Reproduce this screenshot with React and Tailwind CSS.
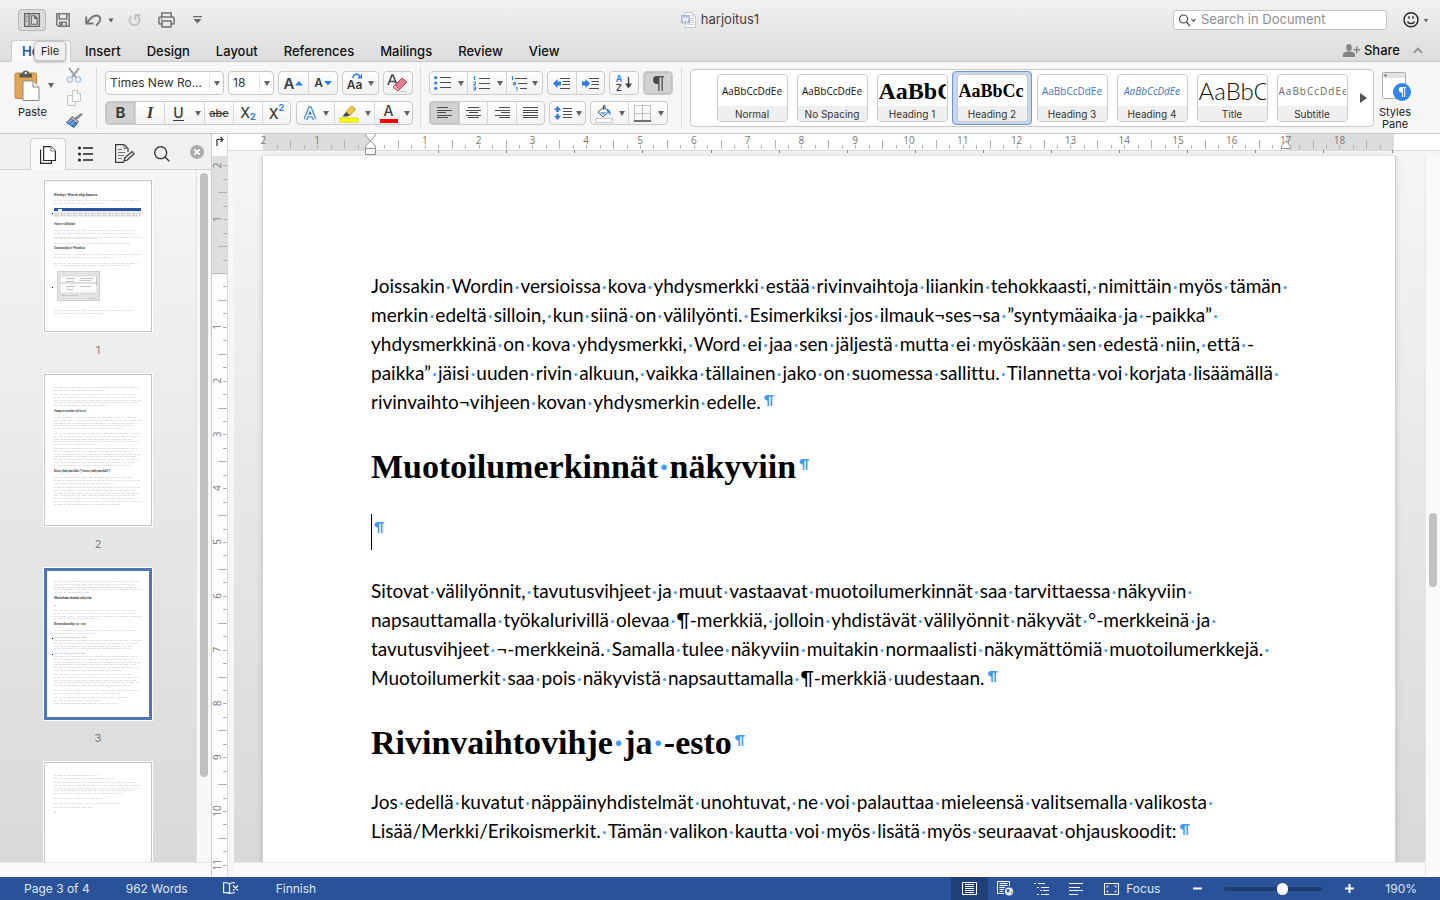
import React from "react";

const GROUP = "flex h-6 shrink-0 rounded border border-[#cbcbcb] bg-gradient-to-b from-white to-[#f1f1f1] overflow-hidden";
const cellBase = "flex h-full items-center justify-center text-[#3d3d3d]";

function Caret({ className = "" }) {
  return (
    <svg width="6" height="5" viewBox="0 0 6 5" className={className} aria-hidden="true">
      <path d="M0 0H6L3 5Z" fill="#636363" />
    </svg>
  );
}

function Cell({ label, width, on = false, divided = false, children }) {
  return (
    <button
      type="button"
      aria-label={label}
      className={`${cellBase} ${width} ${on ? "bg-[#d2d2d2] shadow-[inset_0_0_2px_#999]" : ""} ${divided ? "border-l border-[#d6d6d6]" : ""}`}
    >
      {children}
    </button>
  );
}

function QuickAccess() {
  return (
    <div className="flex items-center pl-[18px] text-[#7b7b7b]">
      <button type="button" aria-label="Sidebar" className="flex h-[22px] w-7 items-center justify-center rounded-[3px] border border-[#b9b9b9] bg-[#dadada]">
        <svg width="16" height="14" viewBox="0 0 16 14" fill="none" stroke="#636363" strokeWidth="1.3">
          <path d="M.7.7H15.3V13.3H.7ZM5 .7V13.3" />
          <path d="M2 3.3h1.4M2 5.8h1.4M2 8.3h1.4" strokeWidth="1" />
          <path d="M7.3 2.8h3.7l2.2 2.2v6.2H7.3ZM10.7 3v2.4h2.4" strokeWidth="1.1" />
        </svg>
      </button>
      <button type="button" aria-label="Save" className="ml-[10px]">
        <svg width="14" height="14" viewBox="0 0 14 14" fill="none" stroke="#7b7b7b" strokeWidth="1.6">
          <path d="M.8.8H13.2V13.2H2.4L.8 11.6Z" />
          <path d="M3.2 1v5h7.6V1" />
          <path d="M3.8 13V9.2h6.4V13" />
          <path d="M4.6 9.8h2.2V13H4.6Z" fill="#7b7b7b" stroke="none" />
        </svg>
      </button>
      <button type="button" aria-label="Undo" className="ml-[15px] flex items-center gap-[6px]">
        <svg width="17" height="13" viewBox="0 0 17 13" fill="none" stroke="#777" strokeWidth="2">
          <path d="M1.2 2.5V9.6H8.4M1.8 9C5 4.5 8 1.4 11.2 1.4c2.600 0 4 1.600 4 3.800 0 2.400-1.600 3.800-4.200 6.600" />
        </svg>
        <Caret className="scale-90" />
      </button>
      <button type="button" aria-label="Redo" className="ml-[14px]">
        <svg width="13" height="14" viewBox="0 0 13 14" fill="none" stroke="#c3c3c3" strokeWidth="1.9">
          <path d="M3.500 3.200A5 5 0 1 0 9.600 3.200M7.300 7V2H12.500" />
        </svg>
      </button>
      <button type="button" aria-label="Print" className="ml-[17px]">
        <svg width="17" height="16" viewBox="0 0 17 16" fill="none" stroke="#717171" strokeWidth="1.5">
          <path d="M3.800 5V1H13.200V5" />
          <path d="M4 12H1.700Q.9 12 .9 11V6.200Q.9 5 2.100 5H14.900Q16.100 5 16.100 6.200V11Q16.100 12 15.300 12H13" />
          <path d="M4 9H13V15H4ZM3 7h1.200" />
        </svg>
      </button>
      <button type="button" aria-label="Customize Toolbar" className="ml-[18px]">
        <svg width="9" height="8" viewBox="0 0 9 8"><path d="M0 0H9V1.300H0ZM.5 3H8.500L4.500 7.500Z" fill="#686868" /></svg>
      </button>
    </div>
  );
}

function TitleBar() {
  return (
    <div className="grid h-10 grid-cols-[1fr_auto_1fr] items-center">
      <QuickAccess />
      <div className="flex items-center gap-1 text-[13px] text-[#404040]">
        <svg width="16" height="16" viewBox="0 0 16 16">
          <path d="M4 .5H11L14.500 4V15.500H4Z" fill="#fff" stroke="#c3c6cb" />
          <path d="M11 .5V4h3.500" fill="#eee" stroke="#c3c6cb" />
          <path d="M9 6.500h4M9 8.500h4M9 10.500h4M6 12.500h7" stroke="#ccd0d8" />
          <rect x="0" y="3" width="9" height="8.500" fill="#a6b8df" />
          <path d="M1.800 5 3 9.500 4.500 5.500 6 9.500 7.200 5" fill="none" stroke="#fff" strokeWidth="1.100" />
        </svg>
        <span>harjoitus1</span>
      </div>
      <div className="flex items-center justify-end pr-[11px]">
        <label className="flex h-5 w-[214px] items-center rounded-[3px] border border-[#c4c4c4] bg-white pl-1">
          <svg width="20" height="13" viewBox="0 0 20 13" fill="none" stroke="#4a4a4a" strokeWidth="1.200" className="shrink-0" aria-hidden="true">
            <circle cx="5.500" cy="5" r="4" /><path d="M8.400 8 12 12M13.500 5.200 15.500 7.200 17.500 5.200" />
          </svg>
          <input aria-label="Search in Document" placeholder="Search in Document" className="ml-[3px] min-w-0 flex-1 bg-transparent text-[13px] outline-none placeholder:text-[#8e8e8e]" />
        </label>
        <button type="button" aria-label="Feedback" className="ml-4 flex items-center gap-1">
          <svg width="16" height="17" viewBox="0 0 16 17" fill="none" stroke="#262626" strokeWidth="1.400">
            <circle cx="8" cy="7.700" r="7" /><path d="M4.500 9.400c1 2.800 6 2.800 7 0M6 4.200v2.500M10 4.200v2.500" />
          </svg>
          <Caret className="scale-75" />
        </button>
      </div>
    </div>
  );
}

const TABS = ["Insert", "Design", "Layout", "References", "Mailings", "Review", "View"];

function TabBar() {
  return (
    <div className="flex h-[22px] items-stretch border-b border-[#c9c9c9] text-[13px] font-medium text-[#111]">
      <div className="relative -mb-px ml-[11px] w-[60px]">
        <button type="button" className="h-full w-full rounded-t-sm border border-b-0 border-[#cdcdcd] bg-[#fafafa] pl-[10px] pt-px text-left font-semibold text-[#2b579a]">Home</button>
        <span role="tooltip" className="absolute left-[23px] top-px flex h-5 w-8 items-center justify-center rounded-sm border border-[#c6c6c6] bg-[#f1f1f1] text-[11px] font-normal text-[#222] shadow-[0_1px_3px_rgba(0,0,0,0.35)]">File</span>
      </div>
      <nav className="flex items-center gap-[26px] pl-[14px] pt-[2px]">
        {TABS.map((t) => <button key={t} type="button">{t}</button>)}
      </nav>
      <div className="ml-auto flex items-center pr-[17px]">
        <button type="button" className="flex items-center gap-1">
          <svg width="17" height="13" viewBox="0 0 17 13" fill="#858585">
            <ellipse cx="6" cy="3.500" rx="2.800" ry="3.500" /><path d="M0 13V10Q0 8.500 4 7.500H8Q12 8.500 12 10V13Z" />
            <path d="M13 2.500h1.500V5H17v1.500H14.500V9H13V6.500H10.500V5H13Z" />
          </svg>
          Share
        </button>
        <button type="button" aria-label="Collapse Ribbon" className="ml-[13px]">
          <svg width="10" height="7" viewBox="0 0 10 7" fill="none" stroke="#8b8b8b" strokeWidth="1.800"><path d="M1 6 5 1.500 9 6" /></svg>
        </button>
      </div>
    </div>
  );
}

function Clipboard() {
  return (
    <div className="flex h-full w-24 shrink-0">
      <div className="flex w-14 shrink-0 flex-col pl-[14px] pt-[8px]">
        <button type="button" className="flex flex-col items-start">
          <span className="flex items-center gap-2">
            <svg width="26" height="31" viewBox="0 0 26 31">
              <rect x="1" y="3" width="21.500" height="25.500" rx="1.500" fill="#e0a556" stroke="#c58c40" />
              <path d="M5.500 7.500V4.500Q5.500 3.500 7 3.500H8.500Q8.500 .5 11.800 .5T15 3.500H16.500Q18 3.500 18 4.500V7.500Z" fill="#595959" />
              <circle cx="11.800" cy="3" r="1.200" fill="#eee" />
              <path d="M9 11H19L25 17V30.500H9Z" fill="#fff" stroke="#8c8c8c" />
              <path d="M19 11V17H25" fill="#f5f5f5" stroke="#8c8c8c" />
            </svg>
            <Caret />
          </span>
          <span className="ml-1 mt-[3px] text-[11px] leading-4 text-[#222]">Paste</span>
        </button>
      </div>
      <div className="flex w-9 shrink-0 flex-col items-center pt-[5px]">
        <button type="button" aria-label="Cut">
          <svg width="16" height="16" viewBox="0 0 16 16" fill="none">
            <path d="M3 1 10.500 11M13 1 5.500 11" stroke="#a0a0a0" strokeWidth="2" />
            <circle cx="3.800" cy="12.500" r="2.600" stroke="#a9c4e4" strokeWidth="1.400" /><circle cx="12" cy="12.500" r="2.600" stroke="#a9c4e4" strokeWidth="1.400" />
          </svg>
        </button>
        <button type="button" aria-label="Copy" className="mt-[7px]">
          <svg width="14" height="16" viewBox="0 0 14 16" fill="#f6f6f6" stroke="#c5c5c5">
            <path d="M.5 5.500H5L8.500 9V15.500H.5Z" /><path d="M5.500 .5H10.500L13.500 3.500V11.500H5.500Z" /><path d="M10.500 .5V3.500H13.500" />
          </svg>
        </button>
        <button type="button" aria-label="Format Painter" className="mt-[7px]">
          <svg width="17" height="15" viewBox="0 0 17 15">
            <path d="M16 .8 10.500 5.500M14.200 1.800 9 6.200" stroke="#8c8c8c" strokeWidth="2.400" />
            <path d="M6 3.500 12.500 8.500 11 10.500 4.500 5.500Z" fill="#c9c9c9" stroke="#606060" />
            <path d="M4.500 5.500 11 10.500Q9.500 12.500 8 14.500L.5 9.500Q3 8 4.500 5.500Z" fill="#4a84c4" stroke="#3d5f88" />
            <path d="M2.500 9.500 6 6.500M5 11.500 8 8.500" stroke="#b9d3ef" />
          </svg>
        </button>
      </div>
    </div>
  );
}

function Combo({ label, value, width }) {
  return (
    <div className={`relative flex h-6 shrink-0 rounded border border-[#c6c6c6] bg-white ${width}`}>
      <select aria-label={label} defaultValue={value} className="h-full w-full appearance-none bg-transparent pl-1 pr-[15px] text-[12px] text-[#333] outline-none">
        <option>{value}</option>
      </select>
      <span className="pointer-events-none absolute inset-y-[2px] right-0 flex w-[14px] items-center justify-center border-l border-[#e2e2e2]"><Caret /></span>
    </div>
  );
}

const BLUE = "#2b7de1";

function FontGroup() {
  return (
    <div className="ml-2 flex w-[308px] shrink-0 flex-col gap-[6px]">
      <div className="flex justify-between">
        <Combo label="Font" value="Times New Ro..." width="w-[119px]" />
        <Combo label="Font Size" value="18" width="w-[46px]" />
        <div className={GROUP}>
          <Cell label="Increase Font Size" width="w-[29px]">
            <span className="text-[15px] font-semibold leading-none">A</span>
            <svg width="8" height="5" viewBox="0 0 8 5" className="ml-px"><path d="M0 4.500 4 0 8 4.500Z" fill={BLUE} /></svg>
          </Cell>
          <Cell label="Decrease Font Size" width="w-[29px]" divided>
            <span className="text-[12px] font-semibold leading-none">A</span>
            <svg width="8" height="5" viewBox="0 0 8 5" className="ml-px"><path d="M0 0H8L4 4.500Z" fill={BLUE} /></svg>
          </Cell>
        </div>
        <div className={GROUP}>
          <Cell label="Change Case" width="w-[35px] gap-[6px]">
            <span className="relative pt-[3px] text-[12px] font-semibold leading-none">
              Aa
              <svg width="10" height="6" viewBox="0 0 10 6" fill="none" stroke={BLUE} strokeWidth="1.500" className="absolute -top-[3px] left-[5px]"><path d="M.8 5Q1.500 1.200 4.500 1.200 7 1.200 8 4M9.500 1V4.700H6" /></svg>
            </span>
            <Caret />
          </Cell>
        </div>
        <div className={GROUP}>
          <Cell label="Clear Formatting" width="w-7">
            <svg width="22" height="20" viewBox="0 0 22 20">
              <path d="M1 12 5 2H6L10 12M2.500 8.500H8.500" fill="none" stroke="#4a4a4a" strokeWidth="1.700" />
              <path d="M15 5 20 9 11 18 6 14Z" fill="#e07d8d" stroke="#b84c64" /><path d="M8 12 12.500 16.500 11 18 6 14Z" fill="#f6c3cb" stroke="#b84c64" />
              <path d="M12 18.500H20" stroke="#ccc" />
            </svg>
          </Cell>
        </div>
      </div>
      <div className="flex justify-between">
        <div className={GROUP}>
          <Cell label="Bold" width="w-[29px]" on><b className="text-[15px]">B</b></Cell>
          <Cell label="Italic" width="w-[29px]" divided><i className="font-['Liberation_Serif',serif] text-[17px] font-bold">I</i></Cell>
          <Cell label="Underline" width="w-[28px]" divided><span className="border-b border-[#3d3d3d] text-[14px] font-medium leading-[14px]">U</span></Cell>
          <Cell label="Underline Style" width="w-3"><Caret /></Cell>
          <Cell label="Strikethrough" width="w-[29px]" divided><s className="text-[11px] font-medium">abc</s></Cell>
          <Cell label="Subscript" width="w-[29px]" divided><span className="flex text-[14px] font-medium leading-none">X<span className="pt-[6px] text-[9px] font-bold text-[#2b7de1]">2</span></span></Cell>
          <Cell label="Superscript" width="w-[28px]" divided><span className="flex pt-[2px] text-[14px] font-medium leading-none">X<span className="-mt-1 text-[9px] font-bold text-[#2b7de1]">2</span></span></Cell>
        </div>
        <div className={GROUP}>
          <Cell label="Text Effects" width="w-[37px] gap-[6px]">
            <svg width="14" height="15" viewBox="-.5 -.5 14 15"><path d="M2 13 6.500 1.500 11 13M3.500 9H9.500" fill="none" stroke="#3b8ae6" strokeWidth="4" strokeLinejoin="round" /><path d="M2 13 6.500 1.500 11 13M3.500 9H9.500" fill="none" stroke="#fff" strokeWidth="1.500" strokeLinejoin="round" /></svg>
            <Caret />
          </Cell>
          <Cell label="Highlight" width="w-7" divided>
            <svg width="20" height="19" viewBox="0 0 20 19"><path d="M7 8 12.500 2 16.500 5 11 11.500Z" fill="#f4c63d" stroke="#c99a27" /><path d="M7 8 11 11.500 8 12.500H3.500Z" fill="#4a4a4a" /><rect x="1" y="14" width="18" height="4" fill="#ff0" stroke="#dede00" /></svg>
          </Cell>
          <Cell label="Highlight Color" width="w-3"><Caret /></Cell>
          <Cell label="Font Color" width="w-7" divided>
            <span className="flex w-[18px] flex-col items-center border-b-4 border-[#f00] pb-px text-[14px] font-medium leading-[14px]">A</span>
          </Cell>
          <Cell label="Font Color Options" width="w-[10px]"><Caret /></Cell>
        </div>
      </div>
    </div>
  );
}

const LINE = "#4d4d4d";

function AlignIcon({ rows }) {
  return (
    <svg width="15" height="13" viewBox="0 0 15 13" stroke={LINE} shapeRendering="crispEdges">
      {rows.map(([a, b], i) => <path key={i} d={`M${a} ${Math.round(i * 2.5) + 0.5}H${b}`} />)}
    </svg>
  );
}

function DirIcon({ back }) {
  return (
    <svg width="18" height="13" viewBox="0 0 18 13">
      <path d={back ? "M0 6.500 4.500 2V4.500H8V8.500H4.500V11Z" : "M8 6.500 3.500 2V4.500H0V8.500H3.500V11Z"} fill={BLUE} />
      <path d="M7 1.500H17M9.500 4.500H17M9.500 7.500H17M7 11.500H17" stroke={LINE} />
    </svg>
  );
}

function ParagraphGroup() {
  return (
    <div className="ml-2 flex w-[244px] shrink-0 flex-col gap-[6px]">
      <div className="flex justify-between">
        <div className={GROUP}>
          <Cell label="Bullets" width="w-[25px]">
            <svg width="17" height="14" viewBox="0 0 17 14"><g fill={BLUE}><circle cx="1.700" cy="1.700" r="1.600" /><circle cx="1.700" cy="7" r="1.600" /><circle cx="1.700" cy="12.300" r="1.600" /></g><path d="M6 1.500H17M6 6.500H17M6 11.500H17" stroke={LINE} /></svg>
          </Cell>
          <Cell label="Bullet Style" width="w-3"><Caret /></Cell>
          <Cell label="Numbering" width="w-[27px]" divided>
            <svg width="17" height="15" viewBox="0 0 17 15"><path d="M.5 1 1.500 .5V4M.3 6H2.500V7.500L.4 9H3M.4 11H2.500V14H.4M.8 12.500H2.500" fill="none" stroke={BLUE} /><path d="M6 2.500H17M6 7.500H17M6 12.500H17" stroke={LINE} /></svg>
          </Cell>
          <Cell label="Numbering Style" width="w-3"><Caret /></Cell>
          <Cell label="Multilevel List" width="w-[36px] gap-[5px]" divided>
            <svg width="16" height="15" viewBox="0 0 16 15"><path d="M.5 1 1.500 .5V4M2.500 6.500H4.500V9H2.500V7.700H4.500M5.500 11.500 6 11V14.500" fill="none" stroke={BLUE} /><path d="M4 2.500H16M7 7.500H16M9 12.500H16" stroke={LINE} /></svg>
            <Caret />
          </Cell>
        </div>
        <div className={GROUP}>
          <Cell label="Decrease Indent" width="w-7"><DirIcon back /></Cell>
          <Cell label="Increase Indent" width="w-[28px]" divided><DirIcon /></Cell>
        </div>
        <div className={GROUP}>
          <Cell label="Sort" width="w-7">
            <span className="flex flex-col text-[9px] font-semibold leading-[9px]"><span className="text-[#2b7de1]">A</span><span>Z</span></span>
            <svg width="7" height="12" viewBox="0 0 7 12" className="ml-[3px]"><path d="M2.800 0H4.200V6.500H7L3.500 11.500 0 6.500H2.800Z" fill="#444" /></svg>
          </Cell>
        </div>
        <div className={GROUP}>
          <Cell label="Show Nonprinting Characters" width="w-7" on>
            <svg width="12" height="15" viewBox="0 0 12 15"><path d="M5 0H12V1.300H10.800V15H9.500V1.300H7.500V15H6.200V8H5A4 4 0 0 1 5 0Z" fill="#4a4a4a" /></svg>
          </Cell>
        </div>
      </div>
      <div className="flex gap-1">
        <div className={GROUP}>
          <Cell label="Align Left" width="w-[29px]" on><AlignIcon rows={[[0, 11], [0, 15], [0, 9], [0, 15], [0, 11]]} /></Cell>
          <Cell label="Center" width="w-[28px]" divided><AlignIcon rows={[[2, 13], [0, 15], [3, 12], [0, 15], [2, 13]]} /></Cell>
          <Cell label="Align Right" width="w-[29px]" divided><AlignIcon rows={[[4, 15], [0, 15], [6, 15], [0, 15], [4, 15]]} /></Cell>
          <Cell label="Justify" width="w-[28px]" divided><AlignIcon rows={[[0, 15], [0, 15], [0, 15], [0, 15], [0, 15]]} /></Cell>
        </div>
        <div className={GROUP}>
          <Cell label="Line Spacing" width="w-[35px] gap-[4px]">
            <svg width="18" height="14" viewBox="0 0 18 14"><path d="M3.500 0 7 4H4.800V6H2.200V4H0ZM3.500 14 0 10H2.200V8H4.800V10H7Z" fill={BLUE} /><path d="M9 2.500H18M9 5.500H18M9 8.500H18M9 11.500H18" stroke={LINE} /></svg>
            <Caret />
          </Cell>
        </div>
        <div className={GROUP}>
          <Cell label="Shading" width="w-[25px]">
            <svg width="18" height="19" viewBox="0 0 18 19"><path d="M3 8 9 3 13.500 8 8 13Z" fill="#fff" stroke="#555" /><path d="M8.500 6V1.500Q9 .5 10 1.500V5" fill="none" stroke="#555" /><path d="M11 4.500Q16 5 15.500 11.500L13.500 9Z" fill={BLUE} /><path d="M4.500 8H12L8 11.500Z" fill="#7fb2ee" /><rect x=".5" y="14.500" width="17" height="4" fill="#f8f8f8" stroke="#ccc" /></svg>
          </Cell>
          <Cell label="Shading Color" width="w-3"><Caret /></Cell>
          <Cell label="Borders" width="w-[27px]" divided>
            <svg width="17" height="17" viewBox="0 0 17 17" fill="none" stroke="#8a8a8a"><path d="M.5 .5H16.500M.5 8.500H16.500M.5 .5V16M8.500 .5V16M16.500 .5V16" strokeDasharray="1 1" /><path d="M0 16H17" stroke="#444" strokeWidth="1.500" /></svg>
          </Cell>
          <Cell label="Border Style" width="w-3"><Caret /></Cell>
        </div>
      </div>
    </div>
  );
}

const SERIF = "font-['Liberation_Serif',serif]";
const SANS = "font-['Open_Sans',sans-serif] text-[10px] justify-center";

const STYLES = [
  { name: "Normal", sample: "AaBbCcDdEe", cls: `${SANS} text-[#111]` },
  { name: "No Spacing", sample: "AaBbCcDdEe", cls: `${SANS} text-[#111]` },
  { name: "Heading 1", sample: "AaBbC", cls: `${SERIF} text-[24px] font-bold text-black` },
  { name: "Heading 2", sample: "AaBbCc", cls: `${SERIF} text-[18px] font-bold text-black`, on: true },
  { name: "Heading 3", sample: "AaBbCcDdEe", cls: `${SANS} text-[#4472c4]` },
  { name: "Heading 4", sample: "AaBbCcDdEe", cls: `${SANS} italic text-[#4472c4]` },
  { name: "Title", sample: "AaBbC", cls: "font-['Lato',sans-serif] text-[24px] font-light text-[#111]" },
  { name: "Subtitle", sample: "AaBbCcDdEe", cls: "font-['Open_Sans',sans-serif] text-[10px] tracking-[1px] text-[#666]" },
];

function StyleGallery() {
  return (
    <div className="ml-2 mt-[-2px] flex h-[58px] w-[684px] shrink-0 items-center rounded border border-[#c8c8c8] bg-white pl-[21px]">
      {STYLES.map(({ name, sample, cls, on }) => (
        <button
          key={name}
          type="button"
          className={`flex h-[54px] w-20 items-center justify-center rounded ${on ? "border border-[#6f96cc] bg-[#c5d6ed]" : "border border-transparent"}`}
        >
          <span className="flex h-12 w-[71px] flex-col overflow-hidden rounded border border-[#cacaca] bg-white">
            <span className={`mx-px flex h-[31px] items-center overflow-hidden whitespace-nowrap leading-none ${cls}`}>{sample}</span>
            <span className="flex flex-1 items-center justify-center bg-[#efefef] text-[10px] leading-none text-[#333]">{name}</span>
          </span>
        </button>
      ))}
      <button type="button" aria-label="More Styles" className="ml-[8px]">
        <svg width="7" height="10" viewBox="0 0 7 10"><path d="M0 0 7 5 0 10Z" fill="#555" /></svg>
      </button>
    </div>
  );
}

function Ribbon() {
  return (
    <div className="flex h-[72px] shrink-0 overflow-hidden border-b border-[#c9c9c9] bg-[#f6f6f6]">
      <Clipboard />
      <div className="flex pt-[9px]">
        <span className="-mt-1 h-[62px] w-px shrink-0 bg-[#dcdcdc]" />
        <FontGroup />
        <span className="-mt-1 ml-[7px] h-[62px] w-px shrink-0 bg-[#dcdcdc]" />
        <ParagraphGroup />
        <span className="-mt-1 ml-2 h-[62px] w-px shrink-0 bg-[#dcdcdc]" />
        <StyleGallery />
      </div>
      <button type="button" className="mx-[5px] flex shrink-0 flex-col items-center pt-[9px] text-[11px] leading-3 text-[#222]">
        <svg width="32" height="31" viewBox="0 0 32 31">
          <rect x="3.500" y="1.500" width="23" height="26" rx="1" fill="#fff" stroke="#ababab" /><rect x="4" y="2" width="22" height="5" fill="#e3e3e3" /><circle cx="6.500" cy="4.500" r="1.200" fill="#777" />
          <circle cx="23" cy="21" r="9" fill="#2f86ea" /><path d="M22.500 16H27V17H26.200V26H25.200V17H24V26H23V21.500H22.500A2.700 2.700 0 0 1 22.500 16Z" fill="#fff" />
        </svg>
        <span className="mt-1">Styles</span>
        <span>Pane</span>
      </button>
    </div>
  );
}

const RAG = [86, 81, 84, 87, 83, 79, 86, 82];
const DASHES = ["3 1 5 1 2 1 4 1", "5 1 3 1 6 1", "2 1 4 1 3 1 7 1", "4 1 2 1 5 1"];

const THUMBS = [
  {
    paras: [[20, 23], [50, 53, 57, 58], [63], [74, 77], [83, 85], [130, 133]],
    heads: [[16, "Rivitys·Word-ohjelmassa", 4], [45, "Sitova·välilyönti", 3], [69, "Tavutusohjeet·Wordissa", 3]],
    marks: [33, 107], figure: true, blues: [],
  },
  {
    paras: [[13, 16], [20, 23, 26, 28, 31], [43, 46, 49, 51, 54], [59, 62, 65, 67, 70], [74, 77, 80, 82, 85, 88, 91], [103, 106, 109], [113, 116, 119, 121, 124, 127, 130]],
    heads: [[38, "Sanojen·tavutus·yleisesti", 3], [98, "Kova·yhdysmerkki·(”sitova·yhdysmerkki”)", 3]],
    marks: [], blues: [],
  },
  {
    paras: [[13, 16, 19, 21, 24], [42, 45, 48, 50], [62, 65], [72, 75, 78, 80], [88, 91, 94, 96, 99, 102], [106, 109, 112, 114, 117], [122, 125], [129], [132], [135]],
    heads: [[31, "Muotoilumerkinnät·näkyviin", 3], [57, "Rivinvaihtovihje·ja·-esto", 3]],
    marks: [70, 86], blues: [[69, 32], [85, 31], [37, 2]], selected: true,
  },
  {
    paras: [[13], [16], [20, 23, 26, 28, 31], [36], [41], [45]],
    heads: [], marks: [], blues: [[50, 2]],
  },
];

function Thumb({ page, n }) {
  return (
    <li className="flex h-[194px] shrink-0 flex-col items-center">
      <button type="button" aria-label={`Page ${n}`} className={`h-[152px] w-[108px] overflow-hidden bg-white outline outline-1 outline-white ${page.selected ? "border-[3px] border-[#5076b8]" : "border border-[#c4c4c4]"}`}>
        <svg width="108" height="152" viewBox="0 0 108 152" className={page.selected ? "-ml-[3px] -mt-[3px]" : "-ml-px -mt-px"}>
          {page.paras.map((p, k) => p.map((y, i) => {
            const last = i === p.length - 1;
            const w = last ? 34 + ((k * 17 + p.length * 9) % 44) : RAG[(i + k) % 8];
            return <path key={y} d={`M10 ${y + 0.5}h${w}`} stroke="#e3e3e5" strokeDasharray={DASHES[(i + k) % 4]} />;
          }))}
          {page.blues.map(([y, w]) => <path key={y} d={`M10 ${y + 0.5}h${w}`} stroke="#c3d6ee" strokeDasharray={DASHES[1]} />)}
          {page.heads.map(([y, t, s]) => <text key={y} x="10" y={y} fontSize={s} fontWeight="bold" fontFamily="Liberation Serif, serif" fill="#333">{t}</text>)}
          {page.marks.map((y) => <rect key={y} x="8" y={y} width="1" height="1" fill="#000" />)}
          {page.figure && (
            <g>
              <rect x="10" y="28" width="87" height="3" fill="#2b579a" /><rect x="14" y="29" width="4" height="2" fill="#e8eefa" />
              <rect x="10" y="31" width="87" height="6" fill="#ececec" /><path d="M11 33.500H96M11 35.500H96" stroke="#c8c8c8" strokeDasharray="2 1 1 2" />
              <rect x="13.500" y="91.500" width="42" height="29" fill="#e4e4e4" stroke="#cfcfcf" />
              <rect x="16" y="96" width="37" height="17" fill="#fafafa" stroke="#c5c5c5" strokeWidth=".5" />
              <path d="M22 98.500h9M22 101.500h8M22 106.500h9M22 109.500h7M36 98.500h13M36 100.500h11M36 106.500h11" stroke="#c6c6c6" /><path d="M16 103H53M52.500 97V106M17 115.500H34M45 118.500h8" stroke="#c4c4c4" />
            </g>
          )}
        </svg>
      </button>
      <span className="pt-[10px] text-[11px] leading-4 text-[#7d7d7d]">{n}</span>
    </li>
  );
}

function Sidebar() {
  return (
    <aside className="flex w-[212px] shrink-0 flex-col border-r border-[#cccccc]">
      <div className="flex h-9 shrink-0 items-end border-b border-[#cfcfcf] bg-[#f1f1f1] pl-[30px]">
        <button type="button" aria-label="Thumbnails" className="-mb-px flex h-8 w-9 items-center justify-center rounded-t-sm border border-b-0 border-[#cfcfcf] bg-[#fafafa]">
          <svg width="16" height="18" viewBox="0 0 16 18" fill="#fff" stroke="#2e2e2e" strokeWidth="1.200"><path d="M.6 3.500V17.400H11.500V15" /><path d="M3.600 .6H11L15.400 5V14.500H3.600Z" /><path d="M11 .6V5H15.400" stroke="#888" /></svg>
        </button>
        <button type="button" aria-label="Document Map" className="mb-[7px] ml-3">
          <svg width="15" height="16" viewBox="0 0 15 16"><g fill="#222"><circle cx="1.500" cy="2" r="1.500" /><circle cx="1.500" cy="8" r="1.500" /><circle cx="1.500" cy="14" r="1.500" /></g><path d="M5 2H15M5 8H15M5 14H15" stroke="#222" strokeWidth="1.300" /></svg>
        </button>
        <button type="button" aria-label="Reviewing" className="mb-[6px] ml-[22px]">
          <svg width="20" height="19" viewBox="0 0 20 19" fill="none" stroke="#3a3a3a" strokeWidth="1.200"><path d="M9 18.400H.6V.6H9L13 4.500V8" /><path d="M9 .6V4.500H13M3 5.500H7M3 8.500H10M3 11.500H9M3 14.500H7" stroke="#777" strokeWidth="1" /><path d="M9 17 10 13.500 17 7.500 19.200 9.700 12.300 16Z" fill="#ddd" /></svg>
        </button>
        <button type="button" aria-label="Find" className="mb-[7px] ml-[19px]">
          <svg width="16" height="16" viewBox="0 0 16 16" fill="none" stroke="#2e2e2e" strokeWidth="1.300"><circle cx="6.700" cy="6.700" r="6" /><path d="M11 11 15.300 15.300" /></svg>
        </button>
        <button type="button" aria-label="Close Sidebar" className="mb-[10px] ml-5">
          <svg width="14" height="14" viewBox="0 0 14 14"><circle cx="7" cy="7" r="7" fill="#acacac" /><path d="M4.300 4.300 9.700 9.700M9.700 4.300 4.300 9.700" stroke="#fff" strokeWidth="1.700" /></svg>
        </button>
      </div>
      <div className="flex min-h-0 flex-1">
        <ol className="flex min-w-0 flex-1 flex-col overflow-hidden border-r border-[#e3e3e3] bg-gradient-to-b from-[#f5f5f5] to-[#d9d9d9] pt-[10px]">
          {THUMBS.map((p, i) => <Thumb key={i} page={p} n={i + 1} />)}
        </ol>
        <div className="w-[14px] shrink-0 bg-[#f8f8f8] px-[3px] pt-[3px]"><div className="h-[604px] w-2 rounded-full bg-[#c0c0c0]" /></div>
      </div>
      <div className="h-[15px] shrink-0 border-t border-[#e6e6e6] bg-[#fafafa]" />
    </aside>
  );
}

const CM = 53.8;
const range = (a, b) => Array.from({ length: b - a + 1 }, (_, i) => a + i);
const RULER_FONT = "Open Sans, sans-serif";

function HorizontalRuler() {
  const x0 = 143;
  return (
    <svg height="22" className="w-full shrink-0 bg-[#f6f6f6]" aria-label="Horizontal ruler">
      <rect width="100%" height="16" fill="#fff" />
      <rect x="35" width="107" height="16" fill="#dcdcdc" /><rect x="1058" width="108" height="16" fill="#dcdcdc" />
      <path d="M0 16.500H1500" stroke="#d9d9d9" />
      {range(-7, 75).map((q) => {
        const x = Math.round(x0 + (q * CM) / 4) + 0.5;
        return q === 0 ? null : <path key={q} d={`M${x} ${Math.abs(q) % 4 === 2 ? 6 : 11}V15`} stroke="#b4b4b4" />;
      })}
      {range(-2, 18).filter((n) => n !== 0).map((n) => (
        <text key={n} x={x0 + n * CM} y="10" fontSize="10" textAnchor="middle" fontFamily={RULER_FONT} fill="#777">{Math.abs(n)}</text>
      ))}
      {range(1, 15).map((n) => <path key={n} d={`M${Math.round(x0 + n * 68.1) - 0.5} 16V19`} stroke="#888" />)}
      <g fill="#fff" stroke="#919191"><path d="M138 0V2L142.500 7 147 2V0" /><path d="M137.500 14.500V12L142.500 7 147.500 12V14.500ZM137.500 14.500H147.500V20.500H137.500Z" /><path d="M1053.500 14.500V12L1058 7 1062.500 12V14.500Z" /></g>
    </svg>
  );
}

function VerticalRuler() {
  const y0 = 117;
  return (
    <svg width="16" className="h-full shrink-0 border-r border-[#d9d9d9] bg-[#fdfdfd]" aria-label="Vertical ruler">
      <rect width="16" height="117" fill="#dedede" />
      <path d="M0 117.500H16" stroke="#bbb" />
      {range(-8, 45).map((q) => {
        const y = Math.round(y0 + (q * CM) / 4) + 0.5;
        return q === 0 ? null : <path key={q} d={`M${Math.abs(q) % 4 === 2 ? 6 : 11} ${y}H15`} stroke="#b4b4b4" />;
      })}
      {range(-2, 11).filter((n) => n !== 0).map((n) => (
        <text key={n} transform={`translate(9 ${y0 + n * CM}) rotate(-90)`} fontSize="10" textAnchor="middle" fontFamily={RULER_FONT} fill="#777">{Math.abs(n)}</text>
      ))}
    </svg>
  );
}

function Marked({ text, dot = "px-px" }) {
  return text.split(" ").map((word, i) => (
    <React.Fragment key={i}>
      {i > 0 && <span className={`text-[#3d9bf5] ${dot}`}>·</span>}
      {word}
    </React.Fragment>
  ));
}

function Pilcrow({ raise = "align-[4px]" }) {
  return <span className={`ml-[3px] font-['Lato',sans-serif] text-[14px] font-bold leading-none text-[#3d9bf5] ${raise}`}>¶</span>;
}

function Para({ lines, className = "" }) {
  return (
    <p className={`whitespace-nowrap font-['Lato',sans-serif] text-[19px] leading-[29px] text-black [font-variant-ligatures:none] ${className}`}>
      {lines.map((l, i) => (
        <span key={i} className="block"><Marked text={l} />{i === lines.length - 1 && <Pilcrow />}</span>
      ))}
    </p>
  );
}

function Heading({ text, className }) {
  return (
    <h2 className={`whitespace-nowrap font-['Liberation_Serif',serif] text-[34px] font-bold leading-10 text-black ${className}`}>
      <Marked text={text} dot="" /><Pilcrow raise="align-[9px]" />
    </h2>
  );
}

const P1 = [
  "Joissakin Wordin versioissa kova yhdysmerkki estää rivinvaihtoja liiankin tehokkaasti, nimittäin myös tämän ",
  "merkin edeltä silloin, kun siinä on välilyönti. Esimerkiksi jos ilmauk¬ses¬sa ”syntymäaika ja -paikka” ",
  "yhdysmerkkinä on kova yhdysmerkki, Word ei jaa sen jäljestä mutta ei myöskään sen edestä niin, että -",
  "paikka” jäisi uuden rivin alkuun, vaikka tällainen jako on suomessa sallittu. Tilannetta voi korjata lisäämällä ",
  "rivinvaihto¬vihjeen kovan yhdysmerkin edelle.",
];
const P2 = [
  "Sitovat välilyönnit, tavutusvihjeet ja muut vastaavat muotoilumerkinnät saa tarvittaessa näkyviin ",
  "napsauttamalla työkalurivillä olevaa ¶-merkkiä, jolloin yhdistävät välilyönnit näkyvät °-merkkeinä ja ",
  "tavutusvihjeet ¬-merkkeinä. Samalla tulee näkyviin muitakin normaalisti näkymättömiä muotoilumerkkejä. ",
  "Muotoilumerkit saa pois näkyvistä napsauttamalla ¶-merkkiä uudestaan.",
];
const P3 = [
  "Jos edellä kuvatut näppäinyhdistelmät unohtuvat, ne voi palauttaa mieleensä valitsemalla valikosta ",
  "Lisää/Merkki/Erikoismerkit. Tämän valikon kautta voi myös lisätä myös seuraavat ohjauskoodit:",
];

function Workspace() {
  return (
    <main className="flex min-w-0 flex-1 flex-col">
      <div className="flex min-h-0 flex-1">
        <div className="flex w-4 shrink-0 flex-col">
          <button type="button" aria-label="Tab Stop" className="flex h-[22px] shrink-0 items-center justify-center border-r border-[#d9d9d9] bg-[#fbfbfb] pb-2">
            <svg width="8" height="10" viewBox="0 0 8 10" fill="none" stroke="#333" strokeWidth="1.200"><path d="M1 10V3.500H6M4.500 1 7 3.500 4.500 6" /></svg>
          </button>
          <div className="min-h-0 flex-1"><VerticalRuler /></div>
        </div>
        <div className="flex min-w-0 flex-1 flex-col">
          <HorizontalRuler />
          <div className="flex min-h-0 flex-1">
            <div className="w-[6px] shrink-0 bg-[#f6f6f6]" />
            <div className="flex min-h-0 min-w-0 flex-1 flex-col">
              <div className="flex min-h-0 flex-1 bg-gradient-to-b from-[#f5f5f5] to-[#d9d9d9] pl-[28px] pr-[29px]">
                <article className="min-w-0 flex-1 overflow-hidden border-x border-[#d0d0d0] bg-white pl-[108px] pt-[115px] shadow-[0_0_6px_rgba(0,0,0,0.15)]">
                  <Para lines={P1} />
                  <Heading text="Muotoilumerkinnät näkyviin" className="mt-[31px]" />
                  <div className="mt-[27px] flex h-9 items-center border-l border-black"><span className="-ml-px -mt-1"><Pilcrow /></span></div>
                  <Para lines={P2} className="mt-[26px]" />
                  <Heading text="Rivinvaihtovihje ja -esto" className="mt-[31px]" />
                  <Para lines={P3} className="mt-6" />
                </article>
              </div>
              <div className="h-[15px] shrink-0 border-t border-[#e6e6e6] bg-[#fafafa]" />
            </div>
            <div className="flex w-[15px] shrink-0 flex-col items-center border-l border-[#e6e6e6] bg-[#fafafa] pt-[357px]"><div className="h-[74px] w-2 rounded-full bg-[#c1c1c1]" /></div>
          </div>
        </div>
      </div>
    </main>
  );
}

function StatusBar() {
  return (
    <footer className="flex h-[23px] shrink-0 items-center bg-[#2a5299] text-[12px] text-[#dfe7f5]">
      <span className="ml-6">Page 3 of 4</span>
      <span className="ml-9">962 Words</span>
      <button type="button" aria-label="Proofing" className="ml-[35px]">
        <svg width="16" height="13" viewBox="0 0 16 13" fill="none" stroke="#fff" strokeWidth="1.100"><path d="M6.500 11.500Q4 10.300 .6 10.800V.8Q4 .5 6.500 1.500V12M6.500 1.500Q8.500 .5 12 .8M6.500 11.500Q8.500 10.500 12 10.800M10 3.500 15 8.500M15 3.500 10 8.500" /></svg>
      </button>
      <span className="ml-[37px]">Finnish</span>
      <div className="ml-auto flex h-full items-center">
        <button type="button" aria-label="Print Layout" className="flex h-full w-[37px] items-center justify-center bg-[#1f3f78]">
          <svg width="15" height="13" viewBox="0 0 15 13" fill="none" stroke="#fff"><path d="M.5 .5H14.500V12.500H.5ZM3 2.500H12M3 4.500H12M3 6.500H12M3 8.500H12M3 10.500H12" /></svg>
        </button>
        <button type="button" aria-label="Web Layout" className="ml-[9px]">
          <svg width="17" height="15" viewBox="0 0 17 15" fill="none" stroke="#fff"><path d="M7 12.500H.5V.5H12.500V5M2.500 2.500H10.500M2.500 4.500H10.500M2.500 6.500H8M2.500 8.500H7M2.500 10.500H6" /><circle cx="12" cy="10.500" r="4.500" fill="#fff" stroke="#2a5299" /><path d="M9.500 8.500 12 8 12.500 10 11 12 9.800 10.500ZM13.500 11 15 10 14.500 12.500Z" fill="#2a5299" stroke="none" /></svg>
        </button>
        <button type="button" aria-label="Outline" className="ml-5">
          <svg width="16" height="12" viewBox="0 0 16 12" stroke="#fff"><path d="M0 .5H2M4 .5H11M3 4.500H5M7 4.500H15M6 7.500H8M9 7.500H15M3 11.500H5M7 11.500H15" /></svg>
        </button>
        <button type="button" aria-label="Draft" className="ml-[19px]">
          <svg width="15" height="12" viewBox="0 0 15 12" stroke="#fff"><path d="M0 .5H14M0 4.500H11M0 7.500H14M0 11.500H9" /></svg>
        </button>
        <button type="button" className="ml-5 flex items-center gap-[7px]">
          <svg width="15" height="12" viewBox="0 0 15 12" fill="none" stroke="#fff"><path d="M.5 .5H14.500V11.500H.5ZM3 4.500V3H4.500M10.500 3H12V4.500M12 7.500V9H10.500M4.500 9H3V7.500" /></svg>
          Focus
        </button>
        <button type="button" aria-label="Zoom Out" className="ml-[33px]"><svg width="9" height="9" viewBox="0 0 9 9"><path d="M0 4.500H9" stroke="#fff" strokeWidth="2" /></svg></button>
        <input
          type="range" aria-label="Zoom" min="0" max="100" defaultValue="60"
          className="ml-[22px] h-3 w-[98px] appearance-none bg-transparent [&::-webkit-slider-runnable-track]:h-1 [&::-webkit-slider-runnable-track]:rounded-full [&::-webkit-slider-runnable-track]:bg-[#1f3d73] [&::-webkit-slider-thumb]:-mt-1 [&::-webkit-slider-thumb]:h-3 [&::-webkit-slider-thumb]:w-[11px] [&::-webkit-slider-thumb]:appearance-none [&::-webkit-slider-thumb]:rounded-full [&::-webkit-slider-thumb]:bg-white"
        />
        <button type="button" aria-label="Zoom In" className="ml-[23px]"><svg width="9" height="9" viewBox="0 0 9 9"><path d="M0 4.500H9M4.500 0V9" stroke="#fff" strokeWidth="2" /></svg></button>
        <span className="ml-[31px] mr-[23px]">190%</span>
      </div>
    </footer>
  );
}

export default function App() {
  return (
    <div className="flex h-screen flex-col overflow-hidden bg-[#f6f6f6] font-['Inter',sans-serif]">
      <header className="shrink-0 bg-gradient-to-b from-[#f1f1f1] to-[#dcdcdc]">
        <TitleBar />
        <TabBar />
      </header>
      <Ribbon />
      <div className="flex min-h-0 flex-1">
        <Sidebar />
        <Workspace />
      </div>
      <StatusBar />
    </div>
  );
}
